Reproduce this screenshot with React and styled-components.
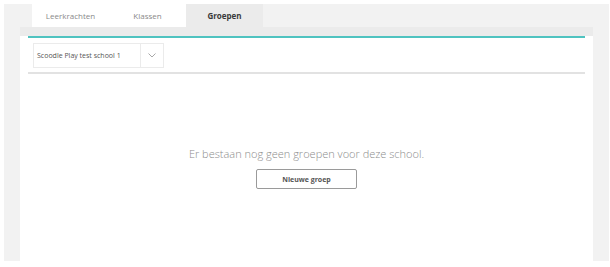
import React from "react";
import styled, { createGlobalStyle } from "styled-components";

const GlobalStyle = createGlobalStyle`
  html, body {
    margin: 0;
    padding: 0;
    background: #ffffff;
    font-family: "Open Sans", "Liberation Sans", sans-serif;
  }
`;

const Page = styled.div`
  margin: 4px 1px 6px 4px;
  height: 257px;
  background: #f2f2f2;
  display: flex;
  flex-direction: column;
`;

const Tabs = styled.nav`
  display: flex;
  height: 23px;
  padding-left: 28px;
`;

const Tab = styled.div`
  width: 77px;
  display: flex;
  align-items: center;
  justify-content: center;
  font-size: 8px;
  color: ${(p) => (p.active ? "#3a3a3a" : "#8a8a8a")};
  font-weight: ${(p) => (p.active ? 700 : 400)};
  background: ${(p) => (p.active ? "#ebebeb" : "#ffffff")};
`;

const Panel = styled.section`
  flex: 1;
  margin: 0 16px;
  background: #ffffff;
  display: flex;
  flex-direction: column;
`;

const PanelTop = styled.div`
  height: 9px;
  background: #ebebeb;
`;

const Card = styled.div`
  flex: 1;
  margin: 0 8px;
  border-top: 2px solid #4fc3c0;
  display: flex;
  flex-direction: column;
`;

const Toolbar = styled.div`
  padding: 5px 5px 4px;
  border-bottom: 2px solid #e2e2e2;
`;

const Select = styled.div`
  width: 129px;
  height: 23px;
  border: 1px solid #ebebeb;
  display: flex;
`;

const SelectLabel = styled.div`
  width: 107px;
  border-right: 1px solid #ebebeb;
  display: flex;
  align-items: center;
  padding-left: 3px;
  box-sizing: border-box;
  font-size: 7px;
  color: #555;
  white-space: nowrap;
`;

const SelectArrow = styled.div`
  flex: 1;
  display: flex;
  align-items: center;
  justify-content: center;
`;

const Empty = styled.div`
  display: flex;
  flex-direction: column;
  align-items: center;
  padding-top: 72px;
`;

const Message = styled.p`
  margin: 0;
  font-size: 11px;
  line-height: 15px;
  font-weight: 300;
  color: #8c8c8c;
`;

const Button = styled.button`
  margin-top: 8px;
  width: 101px;
  height: 20px;
  background: #fff;
  border: 1px solid #9a9a9a;
  border-radius: 2px;
  font-family: "Open Sans", "Liberation Sans", sans-serif;
  font-size: 7px;
  font-weight: 700;
  color: #555;
  padding: 0;
`;

export default function App() {
  return (
    <>
      <GlobalStyle />
      <Page>
        <Tabs>
          <Tab>Leerkrachten</Tab>
          <Tab>Klassen</Tab>
          <Tab active>Groepen</Tab>
        </Tabs>
        <Panel>
          <PanelTop />
          <Card>
            <Toolbar>
              <Select>
                <SelectLabel>Scoodle Play test school 1</SelectLabel>
                <SelectArrow>
                  <svg width="8" height="5" viewBox="0 0 8 5">
                    <path d="M0.5 0.5 L4 4 L7.5 0.5" fill="none" stroke="#a8a8a8" strokeWidth="1" />
                  </svg>
                </SelectArrow>
              </Select>
            </Toolbar>
            <Empty>
              <Message>Er bestaan nog geen groepen voor deze school.</Message>
              <Button>Nieuwe groep</Button>
            </Empty>
          </Card>
        </Panel>
      </Page>
    </>
  );
}
